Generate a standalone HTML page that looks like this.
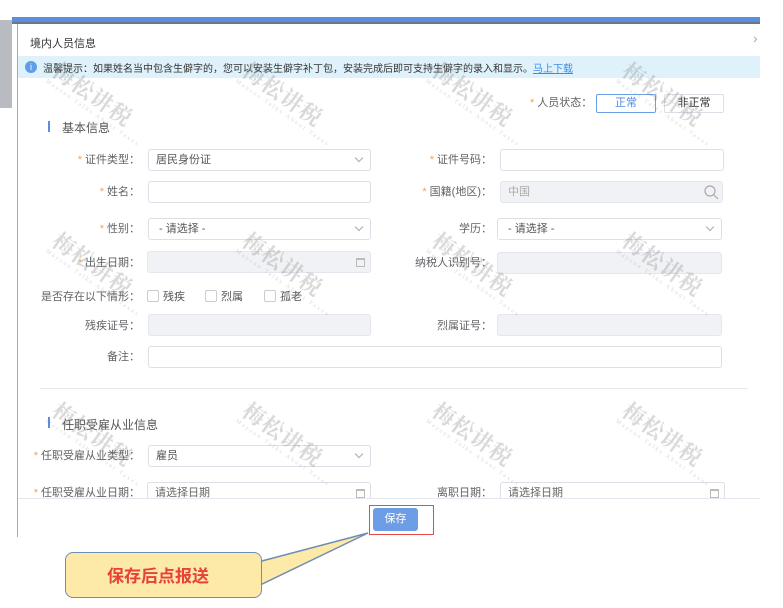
<!DOCTYPE html>
<html style="overflow:hidden"><head><meta charset="utf-8"><style>
*{margin:0;padding:0;box-sizing:border-box}
html,body{width:783px;height:608px;overflow:hidden}
body{position:relative;background:#fff;font-family:"Liberation Sans","Noto Sans CJK SC",sans-serif;font-size:11px;color:#555}
.a{position:absolute}
.lbl{position:absolute;text-align:right;font-size:11px;color:#606266;white-space:nowrap;line-height:14px}
.lbl b{color:#f5a34e;font-weight:normal;margin-right:3px}
.in{position:absolute;height:22px;border:1px solid #dcdfe6;border-radius:3px;background:#fff;font-size:11px;color:#555;padding-left:7px;line-height:20px}
.dis{background:#f1f2f5;border-color:#e4e7ed}
.ch{position:absolute;right:8px;top:5px;width:6px;height:6px;border-right:1px solid #aaa;border-bottom:1px solid #aaa;transform:rotate(45deg)}
.cal{position:absolute;right:5px;top:6px;width:9px;height:9px;border:1px solid #bbb;border-top-width:2px}
.cb{position:absolute;width:12px;height:12px;border:1px solid #ccc;border-radius:2px;background:#fff}
#wmw{position:absolute;left:0;top:0;width:783px;height:608px;overflow:hidden;pointer-events:none}
.wm{position:absolute;transform:rotate(35deg);transform-origin:0 0;color:rgba(130,130,130,.3);font-family:"Noto Serif CJK SC",serif;font-size:22px;font-weight:bold;white-space:nowrap;letter-spacing:1px;line-height:24px}
.wm i{display:block;font-style:normal;font-size:6px;font-family:"Liberation Serif",serif;letter-spacing:2px;line-height:8px;font-weight:normal}
</style></head><body>
<div class="a" style="left:0;top:20px;width:12px;height:88px;background:#b8bbc0"></div>
<div class="a" style="left:12px;top:17px;width:748px;height:5px;background:#5b8de0"></div>
<div class="a" style="left:12px;top:22px;width:748px;height:2px;background:#6c7685"></div>
<div class="a" style="left:17px;top:24px;width:1px;height:513px;background:#aaa"></div>
<div class="a" style="left:30px;top:35px;font-size:11px;color:#333">境内人员信息</div>
<div class="a" style="left:753px;top:30px;font-size:14px;color:#aaa">›</div>
<div class="a" style="left:18px;top:56px;width:742px;height:22px;background:#dff2fb"></div>
<div class="a" style="left:25px;top:61px;width:12px;height:12px;border-radius:50%;background:#5f9de8;color:#fff;font-size:9px;text-align:center;line-height:12px">i</div>
<div class="a" style="left:43px;top:60px;font-size:10px;color:#333;white-space:nowrap">温馨提示：如果姓名当中包含生僻字的，您可以安装生僻字补丁包，安装完成后即可支持生僻字的录入和显示。<span style="color:#3b8ee8;text-decoration:underline">马上下载</span></div>
<div class="lbl" style="left:530px;top:96px"><b>*</b>人员状态：</div>
<div class="a" style="left:596px;top:94px;width:60px;height:19px;border:1px solid #6a9ee8;border-radius:2px;color:#4d8ae6;text-align:center;line-height:17px;font-size:11px">正常</div>
<div class="a" style="left:664px;top:94px;width:60px;height:19px;border:1px solid #dcdfe6;border-radius:2px;color:#333;text-align:center;line-height:17px;font-size:11px">非正常</div>
<div class="a" style="left:48px;top:121px;width:2px;height:11px;background:#5b8de0"></div>
<div class="a" style="left:62px;top:119px;font-size:12px;color:#555">基本信息</div>

<div class="lbl" style="right:643px;top:153px"><b>*</b>证件类型：</div>
<div class="in" style="left:148px;top:149px;width:223px">居民身份证<span class="ch"></span></div>
<div class="lbl" style="right:291px;top:153px"><b>*</b>证件号码：</div>
<div class="in" style="left:500px;top:149px;width:224px"></div>

<div class="lbl" style="right:643px;top:185px"><b>*</b>姓名：</div>
<div class="in" style="left:148px;top:181px;width:223px"></div>
<div class="lbl" style="right:291px;top:185px"><b>*</b>国籍(地区)：</div>
<div class="in dis" style="left:500px;top:181px;width:223px;color:#aaa">中国<svg class="a" style="right:3px;top:3px" width="15" height="15"><circle cx="6" cy="6" r="5" fill="none" stroke="#aaa" stroke-width="1.2"/><line x1="10" y1="10" x2="14" y2="14" stroke="#aaa" stroke-width="1.2"/></svg></div>

<div class="lbl" style="right:643px;top:222px"><b>*</b>性别：</div>
<div class="in" style="left:148px;top:218px;width:223px;padding-left:10px">- 请选择 -<span class="ch"></span></div>
<div class="lbl" style="right:291px;top:222px">学历：</div>
<div class="in" style="left:497px;top:218px;width:225px;padding-left:10px">- 请选择 -<span class="ch"></span></div>

<div class="lbl" style="right:643px;top:256px"><b>*</b>出生日期：</div>
<div class="in dis" style="left:147px;top:251px;width:224px"><span class="cal"></span></div>
<div class="lbl" style="right:291px;top:256px">纳税人识别号：</div>
<div class="in dis" style="left:497px;top:252px;width:225px"></div>

<div class="lbl" style="right:643px;top:290px">是否存在以下情形：</div>
<div class="cb" style="left:147px;top:290px"></div><div class="a" style="left:163px;top:290px;font-size:11px;line-height:14px">残疾</div>
<div class="cb" style="left:205px;top:290px"></div><div class="a" style="left:221px;top:290px;font-size:11px;line-height:14px">烈属</div>
<div class="cb" style="left:264px;top:290px"></div><div class="a" style="left:280px;top:290px;font-size:11px;line-height:14px">孤老</div>

<div class="lbl" style="right:643px;top:319px">残疾证号：</div>
<div class="in dis" style="left:148px;top:314px;width:223px"></div>
<div class="lbl" style="right:291px;top:319px">烈属证号：</div>
<div class="in dis" style="left:497px;top:314px;width:225px"></div>

<div class="lbl" style="right:643px;top:350px">备注：</div>
<div class="in" style="left:148px;top:346px;width:574px"></div>

<div class="a" style="left:40px;top:388px;width:708px;height:1px;background:#e4e7ed"></div>
<div class="a" style="left:48px;top:417px;width:2px;height:11px;background:#5b8de0"></div>
<div class="a" style="left:62px;top:416px;font-size:12px;color:#555">任职受雇从业信息</div>
<div class="lbl" style="right:643px;top:449px"><b>*</b>任职受雇从业类型：</div>
<div class="in" style="left:148px;top:445px;width:223px">雇员<span class="ch"></span></div>
<div class="lbl" style="right:643px;top:486px"><b>*</b>任职受雇从业日期：</div>
<div class="in" style="left:147px;top:482px;width:224px;color:#666">请选择日期<span class="cal"></span></div>
<div class="lbl" style="right:291px;top:486px">离职日期：</div>
<div class="in" style="left:500px;top:482px;width:225px;color:#666">请选择日期<span class="cal"></span></div>

<div class="a" style="left:18px;top:498px;width:742px;height:40px;background:#fff;border-top:1px solid #e4e7ed"></div>
<div class="a" style="left:373px;top:508px;width:45px;height:23px;background:#6d9de6;border-radius:3px;color:#fff;text-align:center;line-height:23px;font-size:11px">保存</div>
<div class="a" style="left:369px;top:505px;width:65px;height:30px;border:1.5px solid #e84a4a"></div>

<svg class="a" style="left:0;top:0" width="783" height="600"><polygon points="258,562 368,533 258,586" fill="#fde9a8" stroke="#6f8db5" stroke-width="1.5"/></svg>
<div class="a" style="left:65px;top:552px;width:197px;height:46px;background:#fde9a8;border:1.5px solid #6f8db5;border-radius:8px"></div>
<div class="a" style="left:107px;top:563px;font-size:17px;line-height:24px;font-weight:bold;color:#e8403a;font-family:'Noto Sans CJK SC',sans-serif">保存后点报送</div>

<div id="wmw">
<div class="wm" style="left:62px;top:58px">梅松讲税<i>Maysun Talks About Taxes</i></div>
<div class="wm" style="left:252px;top:58px">梅松讲税<i>Maysun Talks About Taxes</i></div>
<div class="wm" style="left:442px;top:58px">梅松讲税<i>Maysun Talks About Taxes</i></div>
<div class="wm" style="left:632px;top:58px">梅松讲税<i>Maysun Talks About Taxes</i></div>
<div class="wm" style="left:62px;top:228px">梅松讲税<i>Maysun Talks About Taxes</i></div>
<div class="wm" style="left:252px;top:228px">梅松讲税<i>Maysun Talks About Taxes</i></div>
<div class="wm" style="left:442px;top:228px">梅松讲税<i>Maysun Talks About Taxes</i></div>
<div class="wm" style="left:632px;top:228px">梅松讲税<i>Maysun Talks About Taxes</i></div>
<div class="wm" style="left:62px;top:398px">梅松讲税<i>Maysun Talks About Taxes</i></div>
<div class="wm" style="left:252px;top:398px">梅松讲税<i>Maysun Talks About Taxes</i></div>
<div class="wm" style="left:442px;top:398px">梅松讲税<i>Maysun Talks About Taxes</i></div>
<div class="wm" style="left:632px;top:398px">梅松讲税<i>Maysun Talks About Taxes</i></div>
</div>
</body></html>
